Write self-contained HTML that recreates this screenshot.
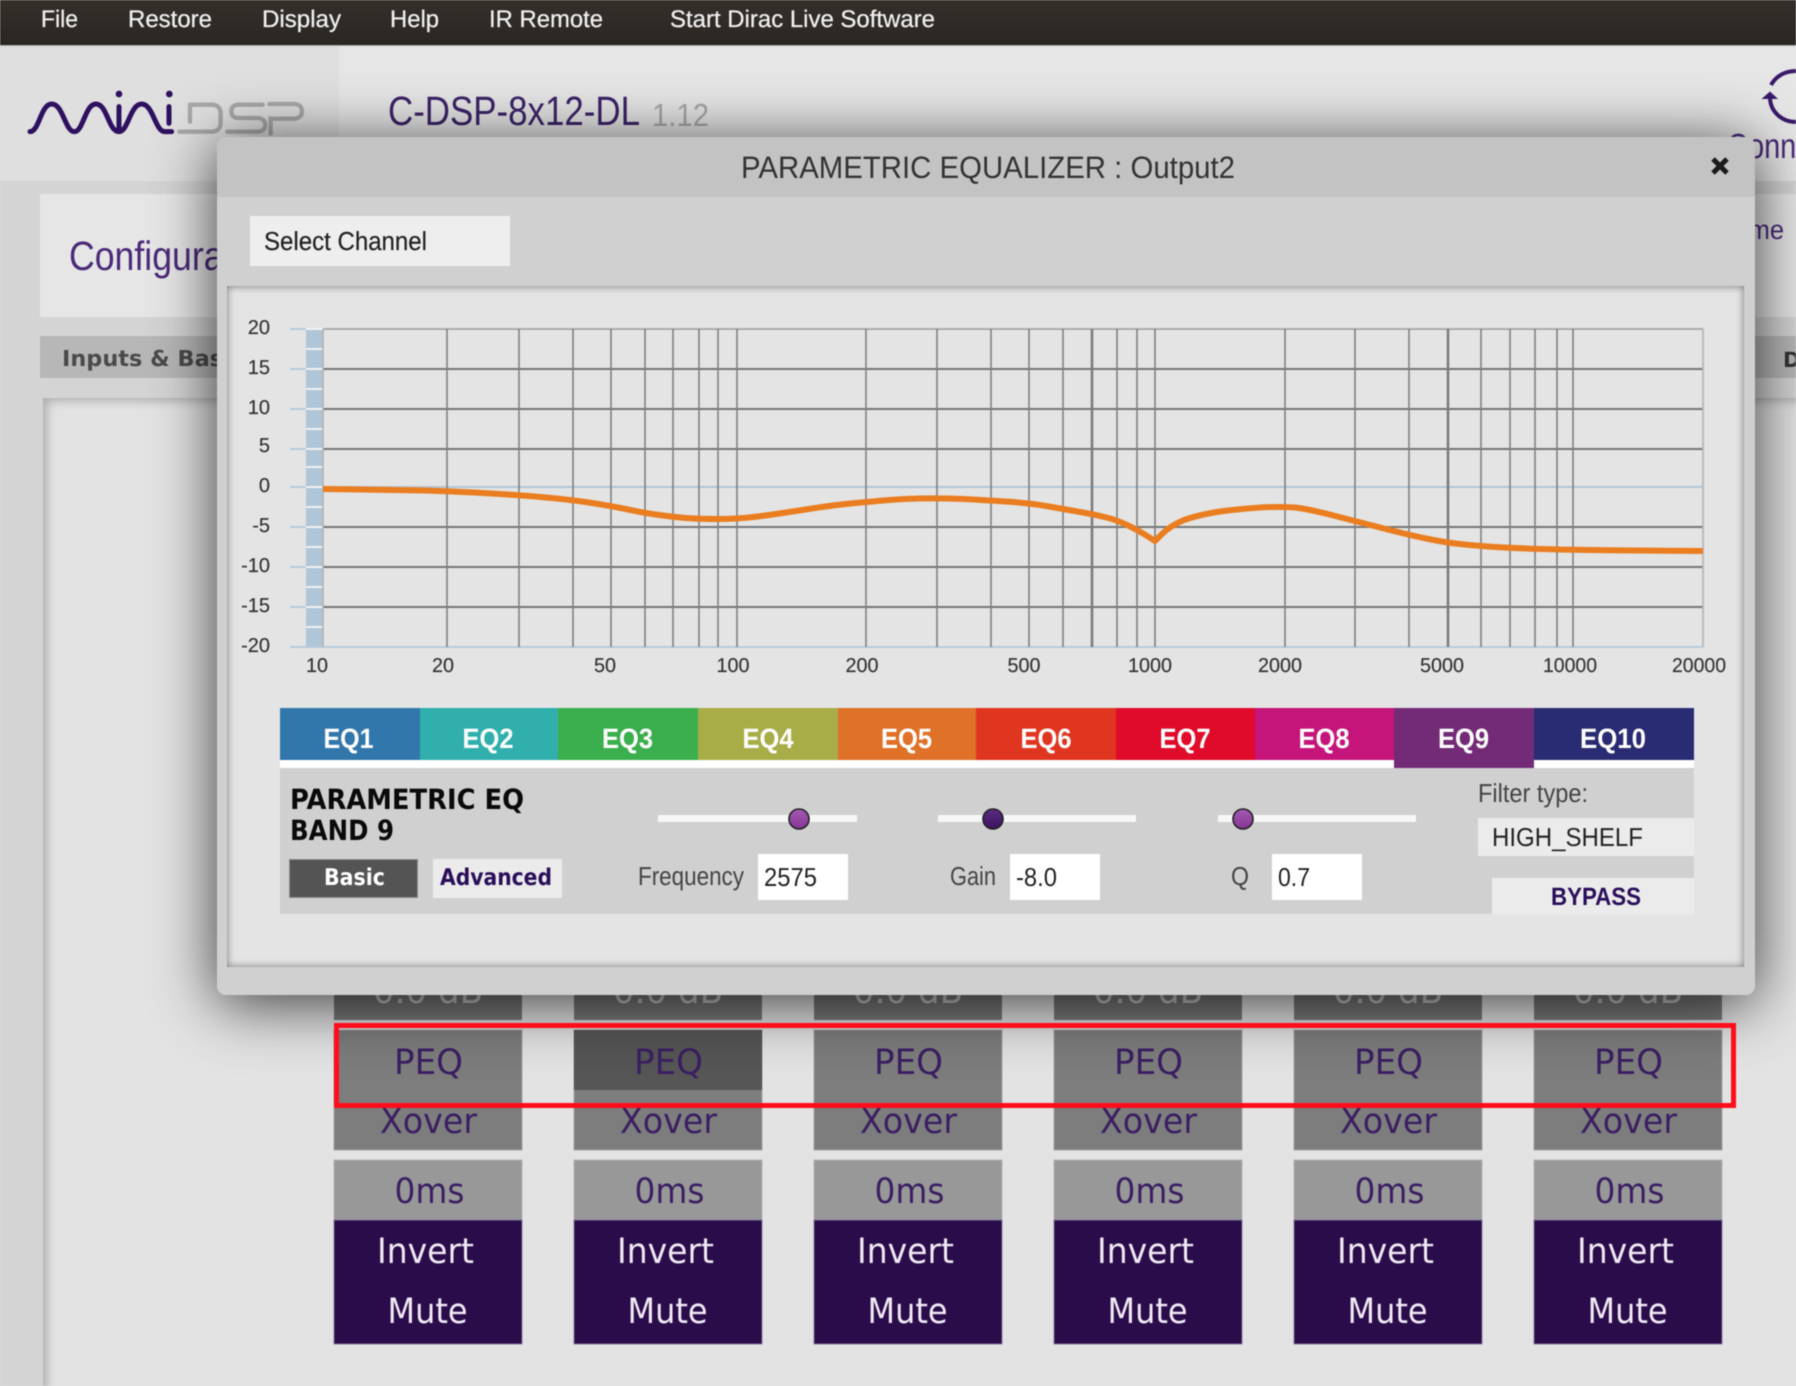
<!DOCTYPE html>
<html><head><meta charset="utf-8"><title>miniDSP</title>
<style>
html,body{margin:0;padding:0;width:1796px;height:1386px;overflow:hidden;background:#e3e3e3}
#w{position:absolute;left:0;top:0;width:1796px;height:1386px;overflow:hidden;filter:blur(.65px);background:#d4d4d4}
.a{position:absolute}
svg{position:absolute;left:0;top:0}
text{font-family:"Liberation Sans",sans-serif;text-rendering:geometricPrecision}
.d{font-family:"DejaVu Sans",sans-serif}
.c text{font-family:"DejaVu Sans",sans-serif;font-size:35px;fill:#3b1f62}
.c .w{fill:#efe9f4}
.c .z{fill:#c9c9c9}
</style></head><body>
<div id="w">
<div class="a" style="left:0;top:46px;width:1796px;height:135px;background:#e6e6e6"></div>
<div class="a" style="left:0;top:46px;width:339px;height:135px;background:#dfdfdf"></div>
<div class="a" style="left:0;top:0;width:1796px;height:46px;background:linear-gradient(#352f2a,#2a2622);border-bottom:1px solid #aaa;box-sizing:border-box"></div>
<div class="a" style="left:40px;top:194px;width:1756px;height:123px;background:#e6e6e6"></div>
<div class="a" style="left:40px;top:336px;width:1756px;height:42px;background:#b7b7b7"></div>
<div class="a" style="left:43px;top:398px;width:1753px;height:988px;background:#e3e3e3;box-shadow:inset 8px 7px 10px -4px rgba(0,0,0,.24)"></div>

<svg width="1796" height="1386" viewBox="0 0 1796 1386">
<g fill="#f0f0f0" stroke="#f0f0f0" stroke-width=".25" font-size="24">
<text x="41" y="27" textLength="37" lengthAdjust="spacingAndGlyphs">File</text>
<text x="128" y="27" textLength="84" lengthAdjust="spacingAndGlyphs">Restore</text>
<text x="262" y="27" textLength="79" lengthAdjust="spacingAndGlyphs">Display</text>
<text x="390" y="27" textLength="49" lengthAdjust="spacingAndGlyphs">Help</text>
<text x="489" y="27" textLength="114" lengthAdjust="spacingAndGlyphs">IR Remote</text>
<text x="670" y="27" textLength="265" lengthAdjust="spacingAndGlyphs">Start Dirac Live Software</text>
</g>
<!-- logo -->
<g transform="translate(20,80) scale(.3333)" fill="none" stroke-linecap="round">
<g stroke="#a8a8a8" stroke-width="13">
<path d="M478,155H575C592,155 602,145 602,128V100C602,84 592,74 575,74H510"/>
<path d="M510,78V125"/>
<path d="M728,74H655C640,74 634,84 634,94C634,106 642,114 655,114H712C728,114 736,124 736,134C736,146 728,155 712,155H622"/>
<path d="M752,160V116H822C838,116 846,106 846,94C846,82 838,72 822,72H748"/>
</g>
<g stroke="#2e1060" stroke-width="15">
<path d="M30,155C58,155 62,72 95,72C130,72 135,155 163,155C190,155 195,72 228,72C262,72 265,155 297,155C325,155 330,72 365,72C400,72 405,155 435,155H455"/>
<path d="M297,80V152M447,80V130"/>
</g>
<circle cx="297" cy="42" r="10" fill="#2e1060"/><circle cx="448" cy="42" r="10" fill="#2e1060"/>
</g>
<text x="388" y="125" font-size="41" fill="#3c2468" textLength="252" lengthAdjust="spacingAndGlyphs">C-DSP-8x12-DL</text>
<text x="652" y="126" font-size="32" fill="#a8a8a8" textLength="57" lengthAdjust="spacingAndGlyphs">1.12</text>
<!-- connect -->
<path d="M1796,71C1785,71 1776,76 1771,85M1770,99C1771,112 1782,122 1796,122" fill="none" stroke="#3a1a6a" stroke-width="4"/>
<path d="M1761.5,99H1778L1770,91.5Z" fill="#3a1a6a"/>
<text x="1727" y="158" font-size="35" fill="#4a2a78" textLength="108" lengthAdjust="spacingAndGlyphs">Connect</text>
<text x="1716" y="239" font-size="27" fill="#4a2a78" textLength="68" lengthAdjust="spacingAndGlyphs">Home</text>
<text x="69" y="270" font-size="41" fill="#4a2a78" textLength="212" lengthAdjust="spacingAndGlyphs">Configuration</text>
<text class="d" x="62" y="366" font-size="22" font-weight="700" fill="#4a4a4a" textLength="182" lengthAdjust="spacingAndGlyphs">Inputs &amp; Basic</text>
<text class="d" x="1783" y="367" font-size="21" font-weight="700" fill="#333">D</text>

<!-- columns -->
<g class="c">
<g stroke="none">
<rect x="334" y="960" width="188" height="60" fill="#7a7a7a"/>
<rect x="334" y="1030" width="188" height="120" fill="#7d7d7d" stroke="#a5a5a5"/>
<rect x="334" y="1160" width="188" height="60" fill="#989898" stroke="#b5b5b5"/>
<rect x="334" y="1220" width="188" height="124" fill="#2a0c4a" stroke="#85759a"/>
<text class="z" x="373" y="1003" textLength="110" lengthAdjust="spacingAndGlyphs">0.0 dB</text>
<text x="394" y="1074" textLength="69" lengthAdjust="spacingAndGlyphs">PEQ</text>
<text x="380" y="1133" textLength="97" lengthAdjust="spacingAndGlyphs">Xover</text>
<text x="394.5" y="1203" textLength="70" lengthAdjust="spacingAndGlyphs">0ms</text>
<text class="w" x="377" y="1263" textLength="97" lengthAdjust="spacingAndGlyphs">Invert</text>
<text class="w" x="387.5" y="1323" textLength="80" lengthAdjust="spacingAndGlyphs">Mute</text>
</g>
<g transform="translate(240,0)">
<rect x="334" y="960" width="188" height="60" fill="#7a7a7a"/>
<rect x="334" y="1030" width="188" height="120" fill="#7d7d7d" stroke="#a5a5a5"/>
<rect x="334" y="1030" width="188" height="60" fill="#565656"/>
<rect x="334" y="1160" width="188" height="60" fill="#989898" stroke="#b5b5b5"/>
<rect x="334" y="1220" width="188" height="124" fill="#2a0c4a" stroke="#85759a"/>
<text class="z" x="373" y="1003" textLength="110" lengthAdjust="spacingAndGlyphs">0.0 dB</text>
<text x="394" y="1074" textLength="69" lengthAdjust="spacingAndGlyphs">PEQ</text>
<text x="380" y="1133" textLength="97" lengthAdjust="spacingAndGlyphs">Xover</text>
<text x="394.5" y="1203" textLength="70" lengthAdjust="spacingAndGlyphs">0ms</text>
<text class="w" x="377" y="1263" textLength="97" lengthAdjust="spacingAndGlyphs">Invert</text>
<text class="w" x="387.5" y="1323" textLength="80" lengthAdjust="spacingAndGlyphs">Mute</text>
</g>
<g transform="translate(480,0)">
<rect x="334" y="960" width="188" height="60" fill="#7a7a7a"/>
<rect x="334" y="1030" width="188" height="120" fill="#7d7d7d" stroke="#a5a5a5"/>
<rect x="334" y="1160" width="188" height="60" fill="#989898" stroke="#b5b5b5"/>
<rect x="334" y="1220" width="188" height="124" fill="#2a0c4a" stroke="#85759a"/>
<text class="z" x="373" y="1003" textLength="110" lengthAdjust="spacingAndGlyphs">0.0 dB</text>
<text x="394" y="1074" textLength="69" lengthAdjust="spacingAndGlyphs">PEQ</text>
<text x="380" y="1133" textLength="97" lengthAdjust="spacingAndGlyphs">Xover</text>
<text x="394.5" y="1203" textLength="70" lengthAdjust="spacingAndGlyphs">0ms</text>
<text class="w" x="377" y="1263" textLength="97" lengthAdjust="spacingAndGlyphs">Invert</text>
<text class="w" x="387.5" y="1323" textLength="80" lengthAdjust="spacingAndGlyphs">Mute</text>
</g>
<g transform="translate(720,0)">
<rect x="334" y="960" width="188" height="60" fill="#7a7a7a"/>
<rect x="334" y="1030" width="188" height="120" fill="#7d7d7d" stroke="#a5a5a5"/>
<rect x="334" y="1160" width="188" height="60" fill="#989898" stroke="#b5b5b5"/>
<rect x="334" y="1220" width="188" height="124" fill="#2a0c4a" stroke="#85759a"/>
<text class="z" x="373" y="1003" textLength="110" lengthAdjust="spacingAndGlyphs">0.0 dB</text>
<text x="394" y="1074" textLength="69" lengthAdjust="spacingAndGlyphs">PEQ</text>
<text x="380" y="1133" textLength="97" lengthAdjust="spacingAndGlyphs">Xover</text>
<text x="394.5" y="1203" textLength="70" lengthAdjust="spacingAndGlyphs">0ms</text>
<text class="w" x="377" y="1263" textLength="97" lengthAdjust="spacingAndGlyphs">Invert</text>
<text class="w" x="387.5" y="1323" textLength="80" lengthAdjust="spacingAndGlyphs">Mute</text>
</g>
<g transform="translate(960,0)">
<rect x="334" y="960" width="188" height="60" fill="#7a7a7a"/>
<rect x="334" y="1030" width="188" height="120" fill="#7d7d7d" stroke="#a5a5a5"/>
<rect x="334" y="1160" width="188" height="60" fill="#989898" stroke="#b5b5b5"/>
<rect x="334" y="1220" width="188" height="124" fill="#2a0c4a" stroke="#85759a"/>
<text class="z" x="373" y="1003" textLength="110" lengthAdjust="spacingAndGlyphs">0.0 dB</text>
<text x="394" y="1074" textLength="69" lengthAdjust="spacingAndGlyphs">PEQ</text>
<text x="380" y="1133" textLength="97" lengthAdjust="spacingAndGlyphs">Xover</text>
<text x="394.5" y="1203" textLength="70" lengthAdjust="spacingAndGlyphs">0ms</text>
<text class="w" x="377" y="1263" textLength="97" lengthAdjust="spacingAndGlyphs">Invert</text>
<text class="w" x="387.5" y="1323" textLength="80" lengthAdjust="spacingAndGlyphs">Mute</text>
</g>
<g transform="translate(1200,0)">
<rect x="334" y="960" width="188" height="60" fill="#7a7a7a"/>
<rect x="334" y="1030" width="188" height="120" fill="#7d7d7d" stroke="#a5a5a5"/>
<rect x="334" y="1160" width="188" height="60" fill="#989898" stroke="#b5b5b5"/>
<rect x="334" y="1220" width="188" height="124" fill="#2a0c4a" stroke="#85759a"/>
<text class="z" x="373" y="1003" textLength="110" lengthAdjust="spacingAndGlyphs">0.0 dB</text>
<text x="394" y="1074" textLength="69" lengthAdjust="spacingAndGlyphs">PEQ</text>
<text x="380" y="1133" textLength="97" lengthAdjust="spacingAndGlyphs">Xover</text>
<text x="394.5" y="1203" textLength="70" lengthAdjust="spacingAndGlyphs">0ms</text>
<text class="w" x="377" y="1263" textLength="97" lengthAdjust="spacingAndGlyphs">Invert</text>
<text class="w" x="387.5" y="1323" textLength="80" lengthAdjust="spacingAndGlyphs">Mute</text>
</g>
</g>
</svg>

<!-- modal -->
<div class="a" style="left:217px;top:137px;width:1538px;height:858px;background:#d0d0d0;border-radius:9px;box-shadow:0 8px 62px rgba(0,0,0,.76);overflow:hidden">
<div class="a" style="left:0;top:0;width:1538px;height:60px;background:#c3c3c3"></div>
<div class="a" style="left:10px;top:149px;width:1517px;height:681px;background:#e4e4e4;box-shadow:inset 0 0 8px rgba(0,0,0,.5)"></div>
<div class="a" style="left:33px;top:79px;width:260px;height:50px;background:#eeeeee"></div>
</div>

<svg width="1796" height="1386" viewBox="0 0 1796 1386">
<text x="741" y="178" font-size="31" fill="#333" textLength="494" lengthAdjust="spacingAndGlyphs">PARAMETRIC EQUALIZER : Output2</text>
<path d="M1713,159L1727,173M1727,159L1713,173" stroke="#1c1c1c" stroke-width="5" fill="none"/>
<text x="264" y="250" font-size="26" fill="#222" stroke="#222" stroke-width=".2" textLength="163" lengthAdjust="spacingAndGlyphs">Select Channel</text>

<!-- chart -->
<rect x="306" y="329" width="17" height="318" fill="#afc5d8"/>
<path d="M306,329H323M306,349H323M306,369H323M306,389H323M306,409H323M306,429H323M306,449H323M306,467H323M306,487H323M306,507H323M306,527H323M306,547H323M306,567H323M306,587H323M306,607H323M306,627H323M306,647H323" stroke="#f2f2f2" stroke-width="2"/>
<path d="M290,329H306M290,369H306M290,409H306M290,449H306M290,487H306M290,527H306M290,567H306M290,607H306M290,647H1703" stroke="#b9cbdb" stroke-width="2" fill="none"/>
<path d="M323,369H1703M323,409H1703M323,449H1703M323,527H1703M323,567H1703M323,607H1703" stroke="#767676" stroke-width="2"/>
<path d="M323,487H1703" stroke="#b4c5d5" stroke-width="2"/>
<path d="M323,329H1703" stroke="#ababab" stroke-width="2"/>
<path d="M323,329V647M1703,329V647" stroke="#b3b3b3" stroke-width="1.6"/>
<path d="M447,329V647M519,329V647M573,329V647M611,329V647M645,329V647M673,329V647M699,329V647M718,329V647M737,329V647M866,329V647M937,329V647M991,329V647M1029,329V647M1063,329V647M1117,329V647M1137,329V647M1155,329V647M1285,329V647M1355,329V647M1409,329V647M1481,329V647M1510,329V647M1535,329V647M1557,329V647M1573,329V647" stroke="#808080" stroke-width="1.6"/>
<path d="M1092,329V647M1448,329V647" stroke="#7c7c7c" stroke-width="2.6"/>
<path fill="none" stroke="#ea7d1f" stroke-width="6" stroke-linejoin="round" d="M323,489L361,489.5Q400,490 423.5,490.5Q447,491 483,493Q519,495 546,497.5Q573,500 592,503Q611,506 628,509.5Q645,513 659,515Q673,517 686,518Q699,519 718,519Q737,519 753.500,517Q770,515 786,512.5Q802,510 818.5,507.5Q835,505 850.5,503.5Q866,502 883,500.5Q900,499 918.5,498.5Q937,498 964,499Q991,500.5 1010,501.8Q1029,503 1046,506Q1063,509 1077.5,511.5Q1092,514 1104.5,517Q1117,520 1127,525Q1140,531 1155,541L1162,534Q1170,526 1184,520Q1198,515 1220,511.5Q1239,509 1260,507.5Q1279,506.5 1295,507.5Q1308,509 1331.5,515Q1355,521 1382,528Q1409,535 1428.5,539Q1448,543 1464.5,544.5Q1481,546 1495.5,547Q1510,548 1541.5,549Q1573,550 1638,550.5L1703,551"/>
<g font-size="20" fill="#333" stroke="#333" stroke-width=".15" text-anchor="end">
<text x="270" y="334">20</text><text x="270" y="374">15</text><text x="270" y="414">10</text><text x="270" y="452">5</text><text x="270" y="492">0</text><text x="270" y="532">-5</text><text x="270" y="572">-10</text><text x="270" y="612">-15</text><text x="270" y="652">-20</text>
</g>
<g font-size="20" fill="#333" stroke="#333" stroke-width=".15" text-anchor="middle">
<text x="317" y="672" textLength="22" lengthAdjust="spacingAndGlyphs">10</text><text x="443" y="672" textLength="22" lengthAdjust="spacingAndGlyphs">20</text><text x="605" y="672" textLength="22" lengthAdjust="spacingAndGlyphs">50</text><text x="733" y="672" textLength="33" lengthAdjust="spacingAndGlyphs">100</text><text x="862" y="672" textLength="33" lengthAdjust="spacingAndGlyphs">200</text><text x="1024" y="672" textLength="33" lengthAdjust="spacingAndGlyphs">500</text><text x="1150" y="672" textLength="44" lengthAdjust="spacingAndGlyphs">1000</text><text x="1280" y="672" textLength="44" lengthAdjust="spacingAndGlyphs">2000</text><text x="1442" y="672" textLength="44" lengthAdjust="spacingAndGlyphs">5000</text><text x="1570" y="672" textLength="54" lengthAdjust="spacingAndGlyphs">10000</text><text x="1699" y="672" textLength="54" lengthAdjust="spacingAndGlyphs">20000</text>
</g>

<!-- tabs -->
<rect x="280" y="760" width="1414" height="8" fill="#ffffff"/>
<rect x="280" y="708" width="140" height="52" fill="#3277ac"/>
<rect x="420" y="708" width="138" height="52" fill="#30afac"/>
<rect x="558" y="708" width="140" height="52" fill="#3baf4e"/>
<rect x="698" y="708" width="140" height="52" fill="#a9ad48"/>
<rect x="838" y="708" width="138" height="52" fill="#e07129"/>
<rect x="976" y="708" width="140" height="52" fill="#e03620"/>
<rect x="1116" y="708" width="139" height="52" fill="#e00a2a"/>
<rect x="1255" y="708" width="139" height="52" fill="#c5157a"/>
<rect x="1394" y="708" width="140" height="60" fill="#732b77"/>
<rect x="1534" y="708" width="160" height="52" fill="#292b73"/>
<g font-size="28" font-weight="700" fill="#fff">
<text x="323.5" y="748" textLength="50" lengthAdjust="spacingAndGlyphs">EQ1</text>
<text x="462.5" y="748" textLength="51" lengthAdjust="spacingAndGlyphs">EQ2</text>
<text x="602" y="748" textLength="51" lengthAdjust="spacingAndGlyphs">EQ3</text>
<text x="742.5" y="748" textLength="51" lengthAdjust="spacingAndGlyphs">EQ4</text>
<text x="881" y="748" textLength="51" lengthAdjust="spacingAndGlyphs">EQ5</text>
<text x="1020.5" y="748" textLength="51" lengthAdjust="spacingAndGlyphs">EQ6</text>
<text x="1159.5" y="748" textLength="51" lengthAdjust="spacingAndGlyphs">EQ7</text>
<text x="1298.5" y="748" textLength="51" lengthAdjust="spacingAndGlyphs">EQ8</text>
<text x="1438" y="748" textLength="51" lengthAdjust="spacingAndGlyphs">EQ9</text>
<text x="1580" y="748" textLength="66" lengthAdjust="spacingAndGlyphs">EQ10</text>
</g>

<!-- control panel -->
<rect x="280" y="768" width="1414" height="146" fill="#d0d0d0"/>
<text class="d" x="290" y="809" font-size="28" font-weight="700" fill="#0a0a0a" textLength="234" lengthAdjust="spacingAndGlyphs">PARAMETRIC EQ</text>
<text class="d" x="290" y="840" font-size="28" font-weight="700" fill="#0a0a0a" textLength="104" lengthAdjust="spacingAndGlyphs">BAND 9</text>
<rect x="289.500" y="859.500" width="128" height="38" fill="#545454" stroke="#8a8a8a"/>
<rect x="433" y="859" width="129" height="39" fill="#ebebeb"/>
<text class="d" x="324" y="885" font-size="23" font-weight="700" fill="#fff" textLength="61" lengthAdjust="spacingAndGlyphs">Basic</text>
<text class="d" x="440" y="885" font-size="23" font-weight="700" fill="#2a0e5a" textLength="112" lengthAdjust="spacingAndGlyphs">Advanced</text>
<defs>
<linearGradient id="t1" x1="0" y1="0" x2="0" y2="1"><stop offset="0" stop-color="#a35bb3"/><stop offset="1" stop-color="#853593"/></linearGradient>
<linearGradient id="t2" x1="0" y1="0" x2="0" y2="1"><stop offset="0" stop-color="#5a2a82"/><stop offset="1" stop-color="#3d155e"/></linearGradient>
</defs>
<rect x="658" y="815" width="199" height="7" fill="#f7f7f7"/>
<rect x="938" y="815" width="198" height="7" fill="#f7f7f7"/>
<rect x="1218" y="815" width="198" height="7" fill="#f7f7f7"/>
<circle cx="799" cy="819" r="10" fill="url(#t1)" stroke="#222" stroke-width="1.6"/>
<circle cx="993" cy="819" r="10" fill="url(#t2)" stroke="#222" stroke-width="1.6"/>
<circle cx="1243" cy="819" r="10" fill="url(#t1)" stroke="#222" stroke-width="1.6"/>
<rect x="758" y="854" width="90" height="46" fill="#fff"/>
<rect x="1010" y="854" width="90" height="46" fill="#fff"/>
<rect x="1272" y="854" width="90" height="46" fill="#fff"/>
<g font-size="26" fill="#444">
<text x="638" y="885" textLength="106" lengthAdjust="spacingAndGlyphs">Frequency</text>
<text x="950" y="885" textLength="46" lengthAdjust="spacingAndGlyphs">Gain</text>
<text x="1231" y="885" textLength="18" lengthAdjust="spacingAndGlyphs">Q</text>
<text x="1478" y="802" textLength="110" lengthAdjust="spacingAndGlyphs">Filter type:</text>
</g>
<g font-size="26" fill="#222">
<text x="764" y="886" textLength="53" lengthAdjust="spacingAndGlyphs">2575</text>
<text x="1016" y="886" textLength="41" lengthAdjust="spacingAndGlyphs">-8.0</text>
<text x="1278" y="886" textLength="32" lengthAdjust="spacingAndGlyphs">0.7</text>
</g>
<rect x="1478" y="818" width="216" height="38" fill="#ebebeb"/>
<text x="1492" y="846" font-size="26" fill="#222" textLength="151" lengthAdjust="spacingAndGlyphs">HIGH_SHELF</text>
<rect x="1492" y="878" width="202" height="36" fill="#ebebeb"/>
<text x="1551" y="905" font-size="25" font-weight="700" fill="#2a0e5a" textLength="90" lengthAdjust="spacingAndGlyphs">BYPASS</text>

<!-- highlight -->
<rect x="336.500" y="1025.500" width="1397" height="80" fill="none" stroke="#ff0d1a" stroke-width="5"/>
</svg>
</div>
</body></html>
